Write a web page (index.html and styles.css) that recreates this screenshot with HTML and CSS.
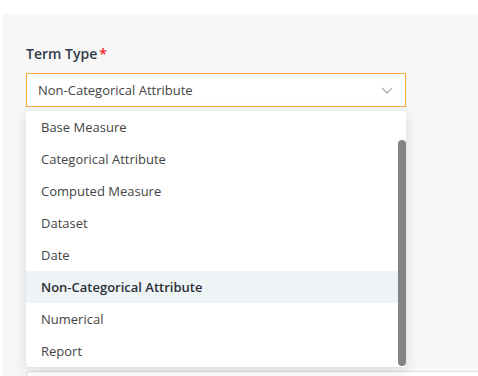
FILE: index.html
```html
<!DOCTYPE html>
<html lang="en">
<head>
  <meta charset="UTF-8" />
  <title>Term Type</title>
  <link rel="stylesheet" href="styles.css">
</head>
<body>
  <div class="panel">
    <div class="field">
      <label class="field-label">Term Type<span class="required">*</span></label>
      <div class="select open">
        <span class="select-value">Non-Categorical Attribute</span>
        <svg class="chevron" width="12" height="7" viewBox="0 0 12 7">
          <path d="M1 1 L6 6 L11 1" fill="none" stroke="#b0b0b0" stroke-width="1.3"/>
        </svg>
        <ul class="menu">
          <li>Base Measure</li>
          <li>Categorical Attribute</li>
          <li>Computed Measure</li>
          <li>Dataset</li>
          <li>Date</li>
          <li class="active">Non-Categorical Attribute</li>
          <li>Numerical</li>
          <li>Report</li>
          <div class="scroll-thumb"></div>
        </ul>
      </div>
    </div>
    <div class="field next">
      <div class="input"></div>
    </div>
  </div>
</body>
</html>
```

FILE: styles.css
```css
* {
  box-sizing: border-box;
}
body {
  margin: 0;
  font-family: 'Open Sans', sans-serif;
  background: #fff;
  overflow: hidden;
}
.panel {
  margin: 14px 0 0 3px;
  padding: 30px 0 0 23px;
  background: #f7f7f7;
  height: 362px;
  overflow: hidden;
}
.field-label {
  display: block;
  font-size: 14px;
  font-weight: 600;
  color: #323c48;
  line-height: 20px;
  margin-bottom: 9px;
}
.required {
  color: #f01e1e;
  margin-left: 2px;
}
.select {
  position: relative;
  width: 380px;
  height: 34px;
  background: #fff;
  border: 1px solid #f5a940;
  display: flex;
  align-items: center;
  padding-left: 11px;
}
.select-value {
  font-size: 13px;
  color: #444;
}
.chevron {
  position: absolute;
  right: 12px;
  top: 13px;
}
.menu {
  position: absolute;
  left: -1px;
  top: 37px;
  width: 380px;
  margin: 0;
  padding: 0;
  list-style: none;
  background: #fff;
  border-radius: 3px;
  box-shadow: 0 3px 14px rgba(0, 0, 0, 0.13);
  z-index: 2;
}
.menu li {
  height: 32px;
  line-height: 32px;
  padding-left: 15px;
  font-size: 13px;
  color: #444;
}
.menu li.active {
  background: #eef3f6;
  color: #2a2f36;
  font-weight: 600;
}
.scroll-thumb {
  position: absolute;
  right: 0;
  top: 29px;
  bottom: 1px;
  width: 8px;
  border-radius: 4px;
  background: rgba(110, 110, 110, 0.85);
}
.field.next {
  margin-top: 264px;
}
.input {
  width: 460px;
  height: 34px;
  background: #fff;
  border: 1px solid #ddd;
  border-radius: 4px;
}
```
